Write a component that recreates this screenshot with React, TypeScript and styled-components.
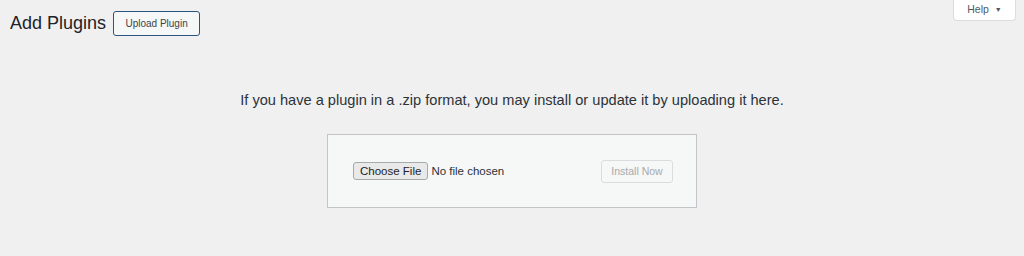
import React from 'react';
import styled, { createGlobalStyle } from 'styled-components';

const GlobalStyle = createGlobalStyle`
    html, body {
        margin: 0;
        padding: 0;
        background: #f0f0f1;
        font-family: "Liberation Sans", Arial, sans-serif;
        color: #1d2327;
    }
`;

export default function App() {
    return (
        <>
            <GlobalStyle/>
            <Page>
                <HelpTab>
                    Help <Caret>▼</Caret>
                </HelpTab>
                <Header>
                    <Title>Add Plugins</Title>
                    <UploadButton>Upload Plugin</UploadButton>
                </Header>
                <UploadSection>
                    <Intro>If you have a plugin in a .zip format, you may install or update it by uploading it here.</Intro>
                    <UploadBox>
                        <FileField>
                            <ChooseButton>Choose File</ChooseButton>
                            <FileName>No file chosen</FileName>
                        </FileField>
                        <InstallButton>Install Now</InstallButton>
                    </UploadBox>
                </UploadSection>
            </Page>
        </>
    );
}

const Page = styled.div`
    position: relative;
    height: 256px;
    padding: 0 10px;
    box-sizing: border-box;
`;

const HelpTab = styled.div`
    position: absolute;
    top: 0;
    right: 8px;
    width: 63px;
    height: 21px;
    box-sizing: border-box;
    background: #fff;
    border: 1px solid #dcdcde;
    border-top: none;
    border-radius: 0 0 4px 4px;
    display: flex;
    align-items: center;
    justify-content: center;
    gap: 6px;
    font-size: 10.5px;
    color: #50575e;
    padding-bottom: 2px;
`;

const Caret = styled.span`
    font-size: 7px;
    color: #50575e;
`;

const Header = styled.div`
    display: flex;
    align-items: center;
    gap: 7px;
    padding-top: 11px;
`;

const Title = styled.h1`
    margin: 0;
    font-size: 18px;
    font-weight: 400;
    color: #1d2327;
    line-height: 25px;
`;

const UploadButton = styled.button`
    height: 25px;
    width: 87px;
    padding: 0;
    border: 1px solid #2a5580;
    border-radius: 3px;
    background: #f6f7f7;
    color: #3c434a;
    font-family: inherit;
    font-size: 10px;
`;

const UploadSection = styled.div`
    display: flex;
    flex-direction: column;
    align-items: center;
    padding-top: 54px;
`;

const Intro = styled.p`
    margin: 0 0 24px;
    font-size: 14.6px;
    line-height: 20px;
    color: #2c3338;
`;

const UploadBox = styled.div`
    width: 370px;
    height: 74px;
    box-sizing: border-box;
    background: #f6f7f7;
    border: 1px solid #c3c4c7;
    display: flex;
    align-items: center;
    justify-content: space-between;
    padding: 0 23px 0 25px;
`;

const FileField = styled.div`
    display: flex;
    align-items: center;
    gap: 3px;
`;

const ChooseButton = styled.button`
    height: 18px;
    padding: 0 6px;
    border: 1px solid #a7aaad;
    border-radius: 3px;
    background: #e9e9ea;
    color: #1d2327;
    font-family: inherit;
    font-size: 11.5px;
    line-height: 15px;
`;

const FileName = styled.span`
    font-size: 11.5px;
    color: #2c3338;
`;

const InstallButton = styled.button`
    height: 23px;
    width: 72px;
    padding: 0;
    border: 1px solid #dcdcde;
    border-radius: 3px;
    background: #f6f7f7;
    color: #a7aaad;
    font-family: inherit;
    font-size: 10.5px;
`;
